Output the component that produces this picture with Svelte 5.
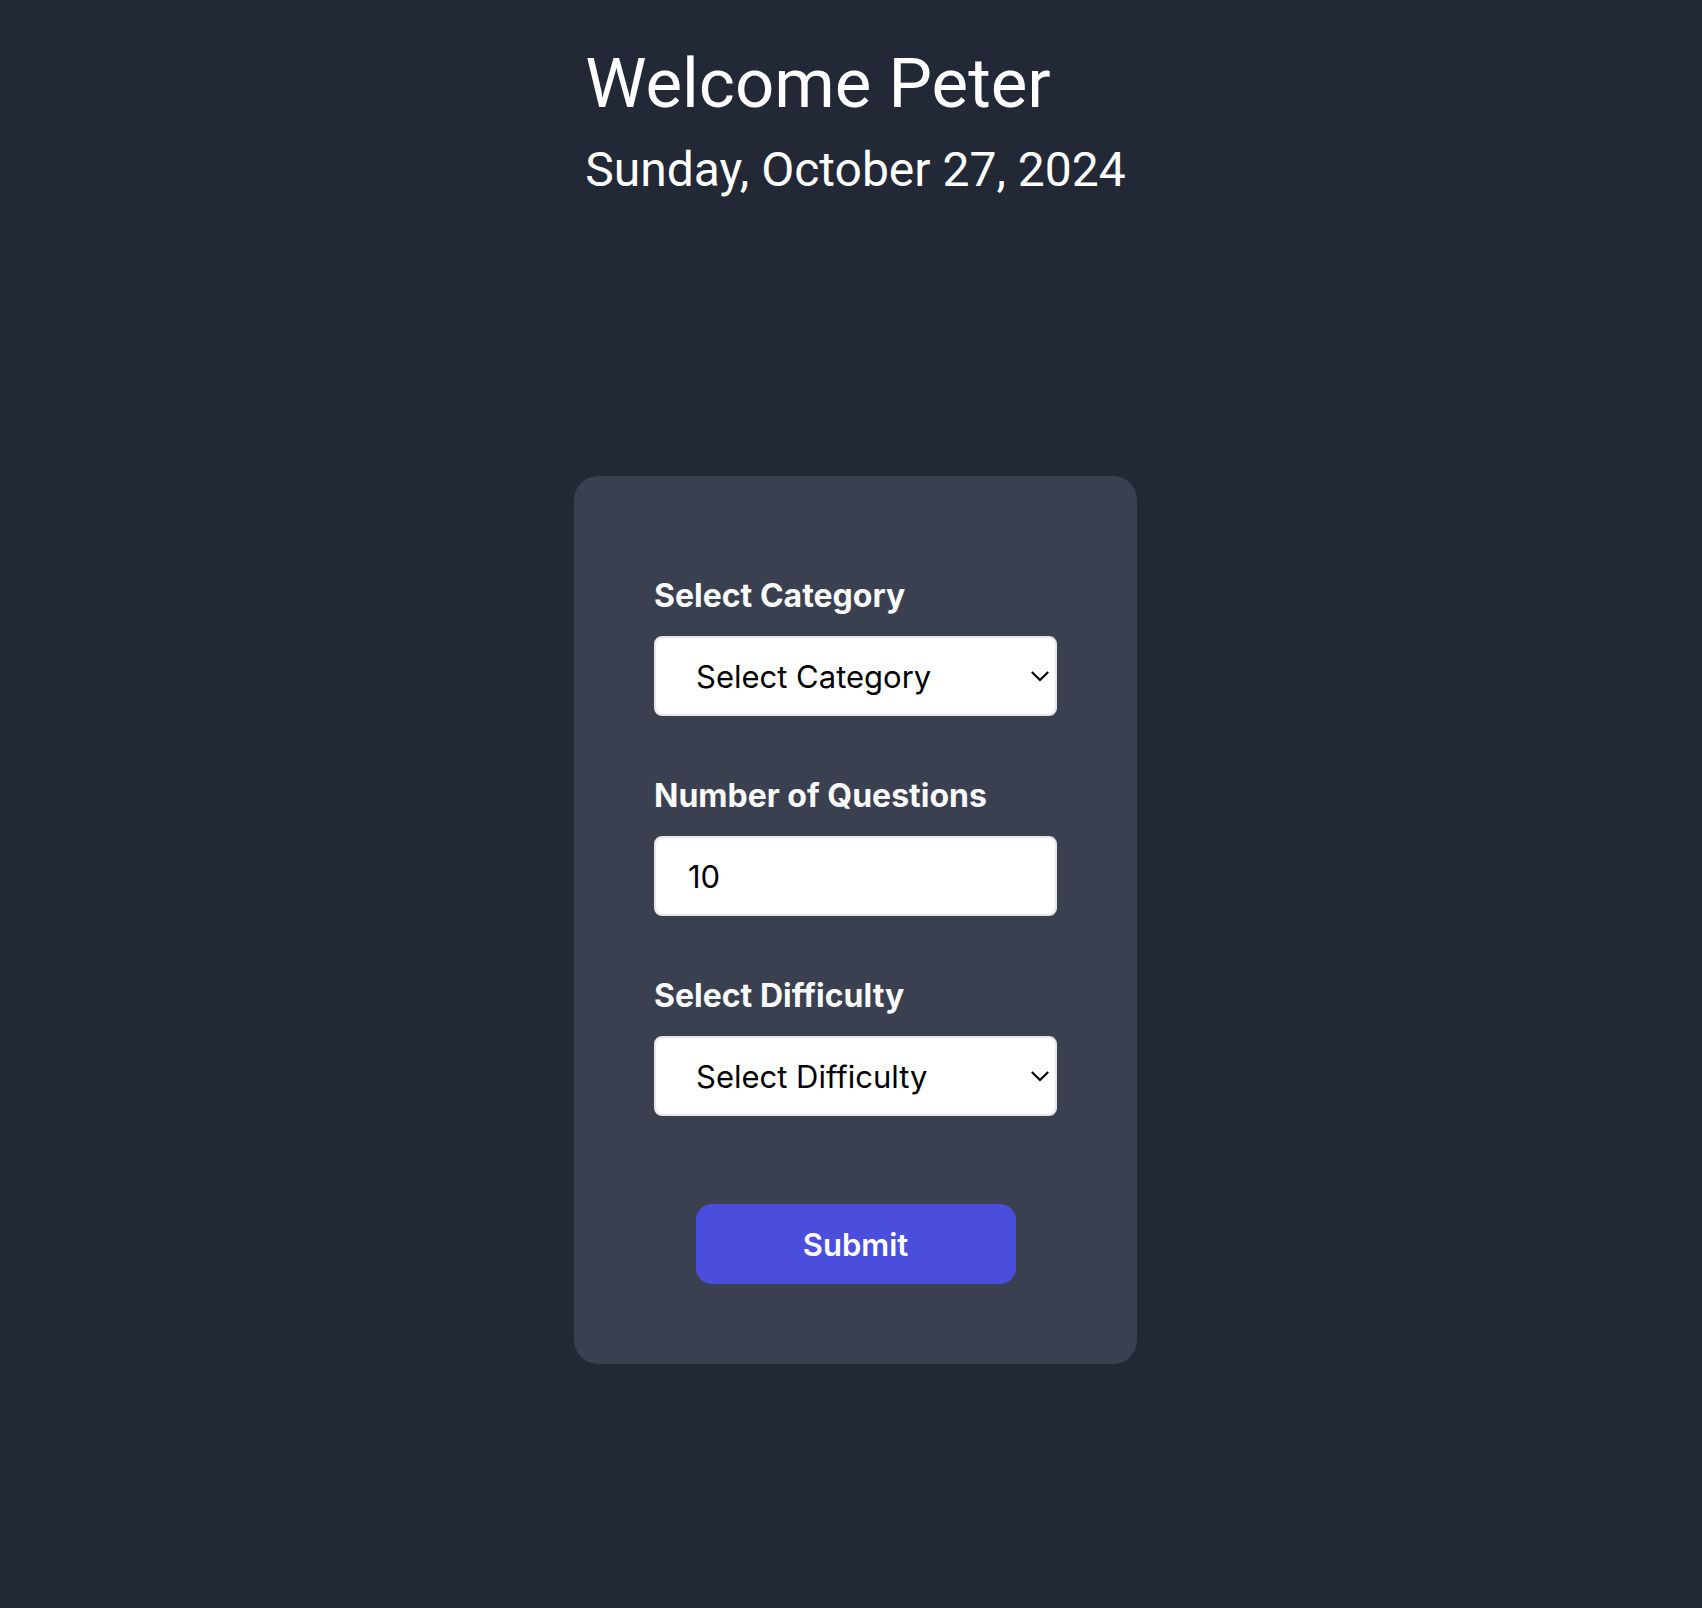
<script>
  const today = 'Sunday, October 27, 2024';
  let category = $state('');
  let amount = $state('10');
  let difficulty = $state('');
</script>

{#snippet chevron()}
  <svg class="chevron" viewBox="0 0 18 10" aria-hidden="true">
    <path d="M0.8 1 9 9 17.200 1" fill="none" stroke="currentColor" stroke-width="2" />
  </svg>
{/snippet}

<main class="page">
  <div class="column">
    <header class="intro">
      <h1>Welcome Peter</h1>
      <p>{today}</p>
    </header>

    <form class="card" onsubmit={(event) => event.preventDefault()}>
      <div class="field">
        <label for="category">Select Category</label>
        <div class="control">
          <select id="category" bind:value={category}>
            <option value="">Select Category</option>
          </select>
          {@render chevron()}
        </div>
      </div>

      <div class="field">
        <label for="amount">Number of Questions</label>
        <div class="control">
          <input id="amount" type="text" inputmode="numeric" bind:value={amount} />
        </div>
      </div>

      <div class="field">
        <label for="difficulty">Select Difficulty</label>
        <div class="control">
          <select id="difficulty" bind:value={difficulty}>
            <option value="">Select Difficulty</option>
          </select>
          {@render chevron()}
        </div>
      </div>

      <button type="submit">Submit</button>
    </form>
  </div>
</main>

<style>
  :global(body) {
    background: #222836;
  }

  .page {
    box-sizing: border-box;
    min-height: 100vh;
    display: flex;
    justify-content: center;
    padding: 42px 0 40px 9px;
    color: #ffffff;
    font-family: Inter, "Liberation Sans", sans-serif;
  }

  .column {
    display: flex;
    flex-direction: column;
    align-items: center;
    gap: 274px;
  }

  .intro {
    font-family: Roboto, "Liberation Sans", sans-serif;
  }

  h1,
  p {
    margin: 0;
    font-weight: 400;
  }

  h1 {
    font-size: 69px;
    line-height: 84px;
  }

  p {
    margin-top: 12px;
    font-size: 48px;
    line-height: 64px;
  }

  .card {
    box-sizing: border-box;
    width: 563px;
    max-width: 100%;
    display: flex;
    flex-direction: column;
    gap: 56px;
    padding: 96px 80px 80px;
    border-radius: 24px;
    background: #3b4050;
  }

  .field {
    display: flex;
    flex-direction: column;
    gap: 16px;
  }

  label {
    color: #f9fafb;
    font-size: 32px;
    font-weight: 700;
    line-height: 48px;
  }

  .control {
    position: relative;
    display: flex;
  }

  select,
  input {
    appearance: none;
    box-sizing: border-box;
    width: 100%;
    height: 80px;
    margin: 0;
    padding: 0 32px;
    border: 2px solid #e5e7eb;
    border-radius: 8px;
    background: #ffffff;
    color: #000000;
    font: inherit;
    font-size: 31px;
  }

  select {
    padding: 0 40px;
  }

  .chevron {
    position: absolute;
    top: 35px;
    right: 8px;
    width: 18px;
    height: 10px;
    color: #000000;
    pointer-events: none;
    overflow: visible;
  }

  button {
    align-self: center;
    width: 320px;
    height: 80px;
    margin-top: 32px;
    border: 0;
    border-radius: 16px;
    background: #4b4edc;
    color: #ffffff;
    font: inherit;
    font-size: 31px;
    font-weight: 600;
  }
</style>
